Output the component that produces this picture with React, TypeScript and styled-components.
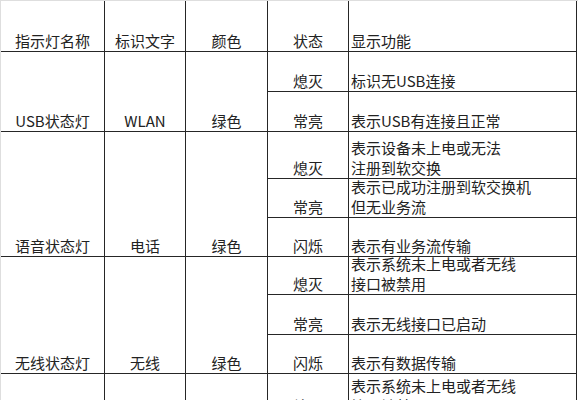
import React from 'react';
import styled, { createGlobalStyle } from 'styled-components';

const GlobalStyle = createGlobalStyle`
  html, body {
    margin: 0;
    padding: 0;
    background: #fff;
  }
  body {
    font-family: "Noto Sans CJK SC", "Microsoft YaHei", sans-serif;
    color: #222;
  }
`;

const line = '#262626';

type Status = { name: string; text: string; height: number };
type Lamp = { name: string; label: string; color: string; states: Status[] };

const lamps: Lamp[] = [
  {
    name: 'USB状态灯',
    label: 'WLAN',
    color: '绿色',
    states: [
      { name: '熄灭', text: '标识无USB连接', height: 40 },
      { name: '常亮', text: '表示USB有连接且正常', height: 40 },
    ],
  },
  {
    name: '语音状态灯',
    label: '电话',
    color: '绿色',
    states: [
      { name: '熄灭', text: '表示设备未上电或无法\n注册到软交换', height: 47 },
      { name: '常亮', text: '表示已成功注册到软交换机\n但无业务流', height: 39 },
      { name: '闪烁', text: '表示有业务流传输', height: 39 },
    ],
  },
  {
    name: '无线状态灯',
    label: '无线',
    color: '绿色',
    states: [
      { name: '熄灭', text: '表示系统未上电或者无线\n接口被禁用', height: 38 },
      { name: '常亮', text: '表示无线接口已启动', height: 40 },
      { name: '闪烁', text: '表示有数据传输', height: 39 },
    ],
  },
  {
    name: '',
    label: '',
    color: '',
    states: [{ name: '熄灭', text: '表示系统未上电或者无线\n接口被禁用', height: 43 }],
  },
];

const Sheet = styled.div`
  width: 578px;
  display: flex;
  flex-direction: column;
  border-top: 1px solid #dedede;
  border-left: 1px solid #dedede;
  box-sizing: border-box;
`;

const Columns = '104px 81px 82px';

const HeaderRow = styled.div`
  display: grid;
  grid-template-columns: ${Columns} 81px 228px;
  height: 51px;
`;

const Group = styled.div`
  display: grid;
  grid-template-columns: ${Columns} 309px;
`;

const SubList = styled.div`
  display: flex;
  flex-direction: column;
`;

const SubRow = styled.div<{ $h: number }>`
  display: grid;
  grid-template-columns: 81px 228px;
  height: ${(p) => p.$h}px;
`;

const Cell = styled.div<{ $left?: boolean }>`
  box-sizing: border-box;
  border-right: 1px solid ${line};
  border-bottom: 1px solid ${line};
  display: flex;
  align-items: flex-end;
  justify-content: ${(p) => (p.$left ? 'flex-start' : 'center')};
  padding: ${(p) => (p.$left ? '0 0 0 2px' : '0')};
  font-size: 15px;
  line-height: 20px;
  white-space: pre-line;
  overflow: hidden;
`;

export default function App() {
  return (
    <>
      <GlobalStyle />
      <Sheet>
        <HeaderRow>
          <Cell>指示灯名称</Cell>
          <Cell>标识文字</Cell>
          <Cell>颜色</Cell>
          <Cell>状态</Cell>
          <Cell $left>显示功能</Cell>
        </HeaderRow>
        {lamps.map((lamp, i) => (
          <Group key={i}>
            <Cell>{lamp.name}</Cell>
            <Cell>{lamp.label}</Cell>
            <Cell>{lamp.color}</Cell>
            <SubList>
              {lamp.states.map((s, j) => (
                <SubRow key={j} $h={s.height}>
                  <Cell>{s.name}</Cell>
                  <Cell $left>{s.text}</Cell>
                </SubRow>
              ))}
            </SubList>
          </Group>
        ))}
      </Sheet>
    </>
  );
}
